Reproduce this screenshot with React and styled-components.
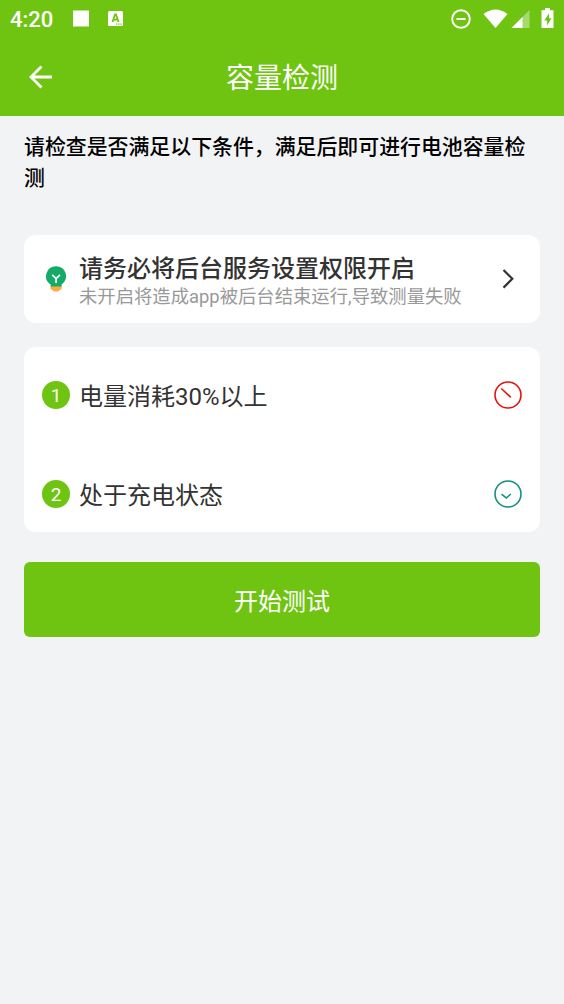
import React from 'react';
import styled, { createGlobalStyle } from 'styled-components';

const GlobalStyle = createGlobalStyle`
  * { box-sizing: border-box; }
  body { margin: 0; background: #f2f3f5; }
`;

const Screen = styled.div`
  min-height: 1004px;
  background: #f2f3f5;
  font-family: Roboto, "Noto Sans CJK SC", sans-serif;
  color: #333;
`;

const Header = styled.header`
  height: 116px;
  background: #6fc412;
  color: #fff;
`;

const StatusBar = styled.div`
  display: flex;
  align-items: center;
  justify-content: space-between;
  height: 38px;
  padding: 0 9px 0 10px;
`;

const StatusLeft = styled.div`
  display: flex;
  align-items: center;
`;

const Time = styled.span`
  width: 63px;
  font-size: 22px;
  line-height: 38px;
  font-weight: 500;
  padding-top: 1px;
`;

const StatusIcons = styled.svg`
  display: block;
`;

const TitleBar = styled.div`
  display: grid;
  grid-template-columns: 56px 1fr 56px;
  align-items: center;
  height: 78px;
`;

const BackButton = styled.button`
  display: flex;
  justify-content: flex-end;
  padding: 0 4px 0 0;
  border: 0;
  background: none;
  color: #fff;
`;

const Title = styled.h1`
  margin: 0;
  padding-top: 4px;
  font-size: 28px;
  line-height: 40px;
  font-weight: 400;
  text-align: center;
`;

const Content = styled.main`
  padding: 16px 24px 0;
`;

const Notice = styled.p`
  margin: 0 -8px 0 0;
  padding-right: 8px;
  color: #000;
  font-size: 20.9px;
  line-height: 30.5px;
  font-weight: 500;
`;

const PermissionCard = styled.section`
  display: flex;
  align-items: center;
  height: 88px;
  margin-top: 42px;
  padding: 0 18px;
  border-radius: 12px;
  background: #fff;
`;

const LeadIcon = styled.div`
  flex: none;
  width: 37px;
  padding-left: 4px;
`;

const CardText = styled.div`
  flex: 1;
  min-width: 0;
  padding-top: 6px;
  white-space: nowrap;
`;

const CardTitle = styled.h2`
  margin: 0;
  font-size: 24px;
  line-height: 30px;
  font-weight: 500;
`;

const CardHint = styled.p`
  margin: 0;
  color: #999;
  font-size: 18.35px;
  line-height: 26px;
`;

const Conditions = styled.section`
  display: flex;
  flex-direction: column;
  gap: 39px;
  height: 185px;
  margin-top: 24px;
  padding: 18px 18px 0;
  border-radius: 12px;
  background: #fff;
`;

const Condition = styled.div`
  display: flex;
  align-items: center;
  height: 60px;
  font-size: 24px;
  line-height: 36px;
`;

const NumberBadge = styled.span`
  display: flex;
  align-items: center;
  justify-content: center;
  width: 28px;
  height: 28px;
  margin-right: 9px;
  padding-top: 1px;
  border-radius: 50%;
  background: #6fc412;
  color: #fff;
  font-size: 19px;
  line-height: 28px;
`;

const ConditionLabel = styled.span`
  flex: 1;
  padding-top: 4px;
`;

const StartButton = styled.button`
  display: block;
  width: 100%;
  height: 75px;
  margin-top: 30px;
  padding: 0;
  border: 0;
  border-radius: 6px;
  background: #6fc412;
  color: #fff;
  font-family: inherit;
  font-size: 24px;
`;

function NotificationIcons() {
  return (
    <StatusIcons width="52" height="20" viewBox="0 0 52 20">
      <rect x="0" y="1.5" width="16" height="16" fill="#fff" />
      <rect x="35" y="2" width="15" height="15" rx="1.5" fill="#fff" />
      <path d="M39.5 13 L42 5.5 H43 L45.5 13 M40.3 10.6 H44.7" fill="none" stroke="#6fc412" strokeWidth="1.8" />
      <path d="M43 15.2 h1.3 M45.2 15.2 h1.3 M47.4 15.2 h1.3" stroke="#6fc412" strokeWidth="1.2" />
    </StatusIcons>
  );
}

function SystemIcons() {
  return (
    <StatusIcons width="105" height="24" viewBox="0 0 105 24">
      <circle cx="11" cy="12" r="8.8" fill="none" stroke="#fff" strokeWidth="1.9" />
      <path d="M6.5 12h9" stroke="#fff" strokeWidth="2" />
      <path d="M33.5 7 Q45.5 -2 57.5 7 L45.5 21 Z" fill="#fff" />
      <path d="M79.5 3 V21 H61.5 Z" fill="#fff" opacity=".38" />
      <path d="M72.5 10 V21 H61.5 Z" fill="#fff" />
      <path d="M95 1 h5 v2.2 h3.5 v17.8 h-12 V3.2 h3.5 Z" fill="#fff" />
      <path d="M99.1 6.2 L94.3 13.4 h2.8 V18.4 L101.5 11.2 h-2.4 Z" fill="#6fc412" />
    </StatusIcons>
  );
}

function BackArrow() {
  return (
    <svg width="24" height="24" viewBox="0 0 24 24" fill="none" stroke="currentColor" strokeWidth="2.8">
      <path d="M24 12H3.5M13.5 1.5L3 12L13.5 22.5" />
    </svg>
  );
}

function Bulb() {
  return (
    <svg width="21" height="27" viewBox="0 0 21 27" style={{ display: 'block' }}>
      <path d="M4.6 20h11v2.6q0 1.2-1.2 1.2h-.6q-.6 1.8-2.4 1.8h-2.6q-1.8 0-2.4-1.8h-.6q-1.2 0-1.2-1.2z" fill="#ffa940" />
      <path d="M10 .2a9.9 9.9 0 0 0-5.4 18.2v2h11v-2A9.9 9.9 0 0 0 10 .2z" fill="#12ab67" />
      <path d="M6.2 8.8l3.9 3.7 3.9-3.7M10.1 12V17" fill="none" stroke="#fff" strokeWidth="1.7" />
    </svg>
  );
}

function Chevron() {
  return (
    <svg width="28" height="24" viewBox="0 0 28 24" fill="none" stroke="#333" strokeWidth="2.2">
      <path d="M9.5 3L18.3 11.8L9.5 20.6" />
    </svg>
  );
}

function StateIcon({ done }) {
  return (
    <svg width="28" height="28" viewBox="0 0 28 28" fill="none" stroke={done ? '#149080' : '#e5120e'} strokeWidth="1.6">
      <circle cx="14" cy="14" r="13" />
      {done ? <path d="M7.5 14.2L12.3 18L16.8 14" /> : <path d="M7.3 7.5L16.8 16.3" />}
    </svg>
  );
}

const conditions = [
  { label: '电量消耗30%以上', done: false },
  { label: '处于充电状态', done: true },
];

export default function App() {
  return (
    <Screen>
      <GlobalStyle />
      <Header>
        <StatusBar>
          <StatusLeft>
            <Time>4:20</Time>
            <NotificationIcons />
          </StatusLeft>
          <SystemIcons />
        </StatusBar>
        <TitleBar>
          <BackButton aria-label="返回"><BackArrow /></BackButton>
          <Title>容量检测</Title>
        </TitleBar>
      </Header>
      <Content>
        <Notice>请检查是否满足以下条件，满足后即可进行电池容量检测</Notice>
        <PermissionCard>
          <LeadIcon><Bulb /></LeadIcon>
          <CardText>
            <CardTitle>请务必将后台服务设置权限开启</CardTitle>
            <CardHint>未开启将造成app被后台结束运行,导致测量失败</CardHint>
          </CardText>
          <Chevron />
        </PermissionCard>
        <Conditions>
          {conditions.map((item, index) => (
            <Condition key={item.label}>
              <NumberBadge>{index + 1}</NumberBadge>
              <ConditionLabel>{item.label}</ConditionLabel>
              <StateIcon done={item.done} />
            </Condition>
          ))}
        </Conditions>
        <StartButton>开始测试</StartButton>
      </Content>
    </Screen>
  );
}
